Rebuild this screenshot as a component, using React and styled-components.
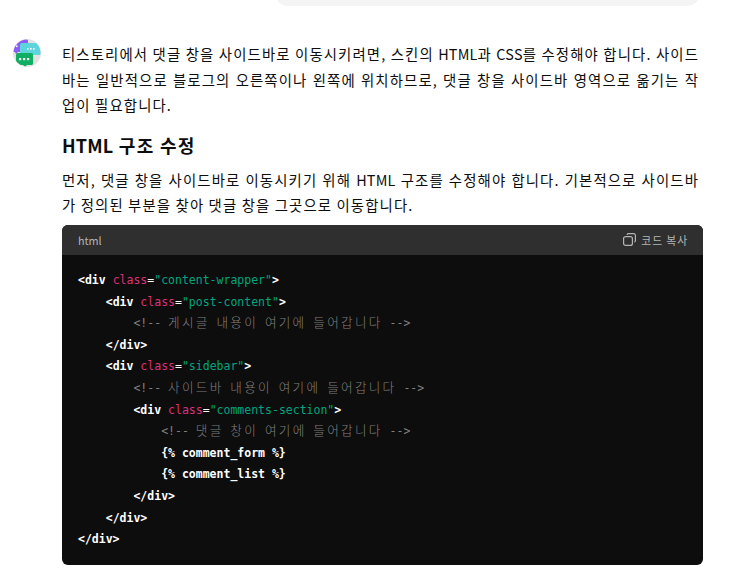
import React from 'react';
import styled, { createGlobalStyle } from 'styled-components';

const GlobalStyle = createGlobalStyle`
  html, body { margin: 0; padding: 0; background: #fff; overflow: hidden; }
  body { font-family: "Noto Sans CJK KR", "Noto Sans", sans-serif; color: #0d0d0d; }
`;

const Page = styled.div`
  width: 744px;
  height: 575px;
  overflow: hidden;
`;

const BubbleRow = styled.div`
  display: flex;
  justify-content: flex-end;
  padding-right: 44px;
`;

const Bubble = styled.div`
  width: 425px;
  height: 26px;
  margin-top: -20px;
  background: #f4f4f4;
  border-radius: 20px;
`;

const Message = styled.div`
  display: flex;
  gap: 21px;
  padding: 33px 41px 0 13px;
`;

const Avatar = styled.div`
  flex: none;
  width: 28px;
  height: 28px;
`;

const Content = styled.div`
  flex: 1;
  min-width: 0;
  padding-top: 2px;
`;

const Para = styled.p`
  margin: ${p => p.$top || 0}px 0 0;
  padding-right: 4px;
  font-size: 14.4px;
  line-height: 25.6px;
  letter-spacing: 1.12px;
  text-align: justify;
  color: #0d0d0d;
`;

const Latin = styled.span`
  letter-spacing: 0.2px;
`;

const Heading = styled.h3`
  margin: 14px 0 0;
  font-size: 18px;
  line-height: 27px;
  font-weight: 600;
  letter-spacing: 1.3px;
  color: #0d0d0d;
`;

const CodeBlock = styled.div`
  margin-top: 7px;
  height: 340px;
  border-radius: 6px;
  overflow: hidden;
  background: #0d0d0d;
`;

const CodeHeader = styled.div`
  height: 30px;
  background: #2f2f2f;
  display: flex;
  align-items: center;
  justify-content: space-between;
  padding: 0 15px 0 16px;
  font-size: 10.8px;
  color: #b4b4b4;
`;

const CopyButton = styled.div`
  display: flex;
  align-items: center;
  gap: 5px;
  letter-spacing: 0.9px;
`;

const Code = styled.pre`
  margin: 0;
  padding: 15px 0 0 16px;
  font-family: "DejaVu Sans Mono", "Noto Sans CJK KR", monospace;
  font-size: 11.5px;
  line-height: 21.6px;
  color: #fff;
`;

const Line = styled.div`
  height: 21.6px;
  padding-left: ${p => (p.$indent || 0) * 27.72}px;
  white-space: pre;
`;

const Tag = styled.span`font-weight: 700; color: #fff;`;
const Attr = styled.span`color: #df3079;`;
const Str = styled.span`color: #00a67d;`;
const Comment = styled.span`color: #808080;`;
const Hangul = styled.span`
  font-family: "Noto Sans CJK KR", sans-serif;
  font-size: 12.6px;
  line-height: 0;
  font-weight: 300;
  letter-spacing: 2.27px;
  word-spacing: 1.8px;
`;

const ChatLogo = () => (
  <svg width="28" height="28" viewBox="0 0 28 28">
    <defs>
      <clipPath id="logoClip">
        <circle cx="14" cy="14" r="13.5" />
      </clipPath>
    </defs>
    <circle cx="14" cy="14" r="14" fill="#e2e2e2" />
    <g clipPath="url(#logoClip)">
      <path d="M2 0h11a2 2 0 0 1 2 2v9a2 2 0 0 1-2 2H5l-2 2-1-2H0V2a2 2 0 0 1 2-2z" fill="#8b5cf6" />
      <path d="M9 4h18a2 2 0 0 1 2 2v8a2 2 0 0 1-2 2H9a2 2 0 0 1-2-2V6a2 2 0 0 1 2-2z" fill="#5cd6dc" />
      <path d="M4.500 14h14a1.500 1.500 0 0 1 1.500 1.500v9a1.500 1.500 0 0 1-1.500 1.500H14l-2 2-2-2H4.500A1.500 1.500 0 0 1 3 24.500v-9A1.500 1.500 0 0 1 4.500 14z" fill="#10ae62" />
    </g>
    <g fill="#fff">
      <rect x="6" y="19" width="2.200" height="2.200" />
      <rect x="10" y="19" width="2.200" height="2.200" />
      <rect x="14" y="19" width="2.200" height="2.200" />
      <rect x="14" y="9" width="1.600" height="1.600" />
      <rect x="17" y="9" width="1.600" height="1.600" />
      <rect x="20" y="9" width="1.600" height="1.600" />
      <rect x="3" y="6.500" width="1.600" height="1.600" />
    </g>
  </svg>
);

const CopyIcon = () => (
  <svg width="13" height="13" viewBox="0 0 13 13" fill="none" stroke="#b4b4b4" strokeWidth="1.2">
    <rect x="0.600" y="3.600" width="8.800" height="8.800" rx="2" />
    <path d="M4 1.800A1.500 1.500 0 0 1 5.300 0.600h5.400a1.700 1.700 0 0 1 1.700 1.700v5.400a1.500 1.500 0 0 1-1.200 1.300" />
  </svg>
);

const KoComment = ({ text }) => (
  <Comment>
    {'<!-- '}
    <Hangul>{text}</Hangul>
    {' -->'}
  </Comment>
);

const Open = ({ cls }) => (
  <>
    <Tag>&lt;div</Tag> <Attr>class</Attr>=<Str>"{cls}"</Str><Tag>&gt;</Tag>
  </>
);

export default function App() {
  return (
    <Page>
      <GlobalStyle />
      <BubbleRow>
        <Bubble />
      </BubbleRow>
      <Message>
        <Avatar>
          <ChatLogo />
        </Avatar>
        <Content>
          <Para>
            티스토리에서 댓글 창을 사이드바로 이동시키려면, 스킨의 <Latin>HTML</Latin>과 <Latin>CSS</Latin>를 수정해야 합니다. 사이드바는 일반적으로 블로그의 오른쪽이나 왼쪽에 위치하므로, 댓글 창을 사이드바 영역으로 옮기는 작업이 필요합니다.
          </Para>
          <Heading><Latin>HTML</Latin> 구조 수정</Heading>
          <Para $top={8}>
            먼저, 댓글 창을 사이드바로 이동시키기 위해 <Latin>HTML</Latin> 구조를 수정해야 합니다. 기본적으로 사이드바가 정의된 부분을 찾아 댓글 창을 그곳으로 이동합니다.
          </Para>
          <CodeBlock>
            <CodeHeader>
              <span>html</span>
              <CopyButton>
                <CopyIcon />
                <span>코드 복사</span>
              </CopyButton>
            </CodeHeader>
            <Code>
              <Line><Open cls="content-wrapper" /></Line>
              <Line $indent={1}><Open cls="post-content" /></Line>
              <Line $indent={2}><KoComment text="게시글 내용이 여기에 들어갑니다" /></Line>
              <Line $indent={1}><Tag>&lt;/div&gt;</Tag></Line>
              <Line $indent={1}><Open cls="sidebar" /></Line>
              <Line $indent={2}><KoComment text="사이드바 내용이 여기에 들어갑니다" /></Line>
              <Line $indent={2}><Open cls="comments-section" /></Line>
              <Line $indent={3}><KoComment text="댓글 창이 여기에 들어갑니다" /></Line>
              <Line $indent={3}><Tag>{'{% comment_form %}'}</Tag></Line>
              <Line $indent={3}><Tag>{'{% comment_list %}'}</Tag></Line>
              <Line $indent={2}><Tag>&lt;/div&gt;</Tag></Line>
              <Line $indent={1}><Tag>&lt;/div&gt;</Tag></Line>
              <Line><Tag>&lt;/div&gt;</Tag></Line>
            </Code>
          </CodeBlock>
        </Content>
      </Message>
    </Page>
  );
}
